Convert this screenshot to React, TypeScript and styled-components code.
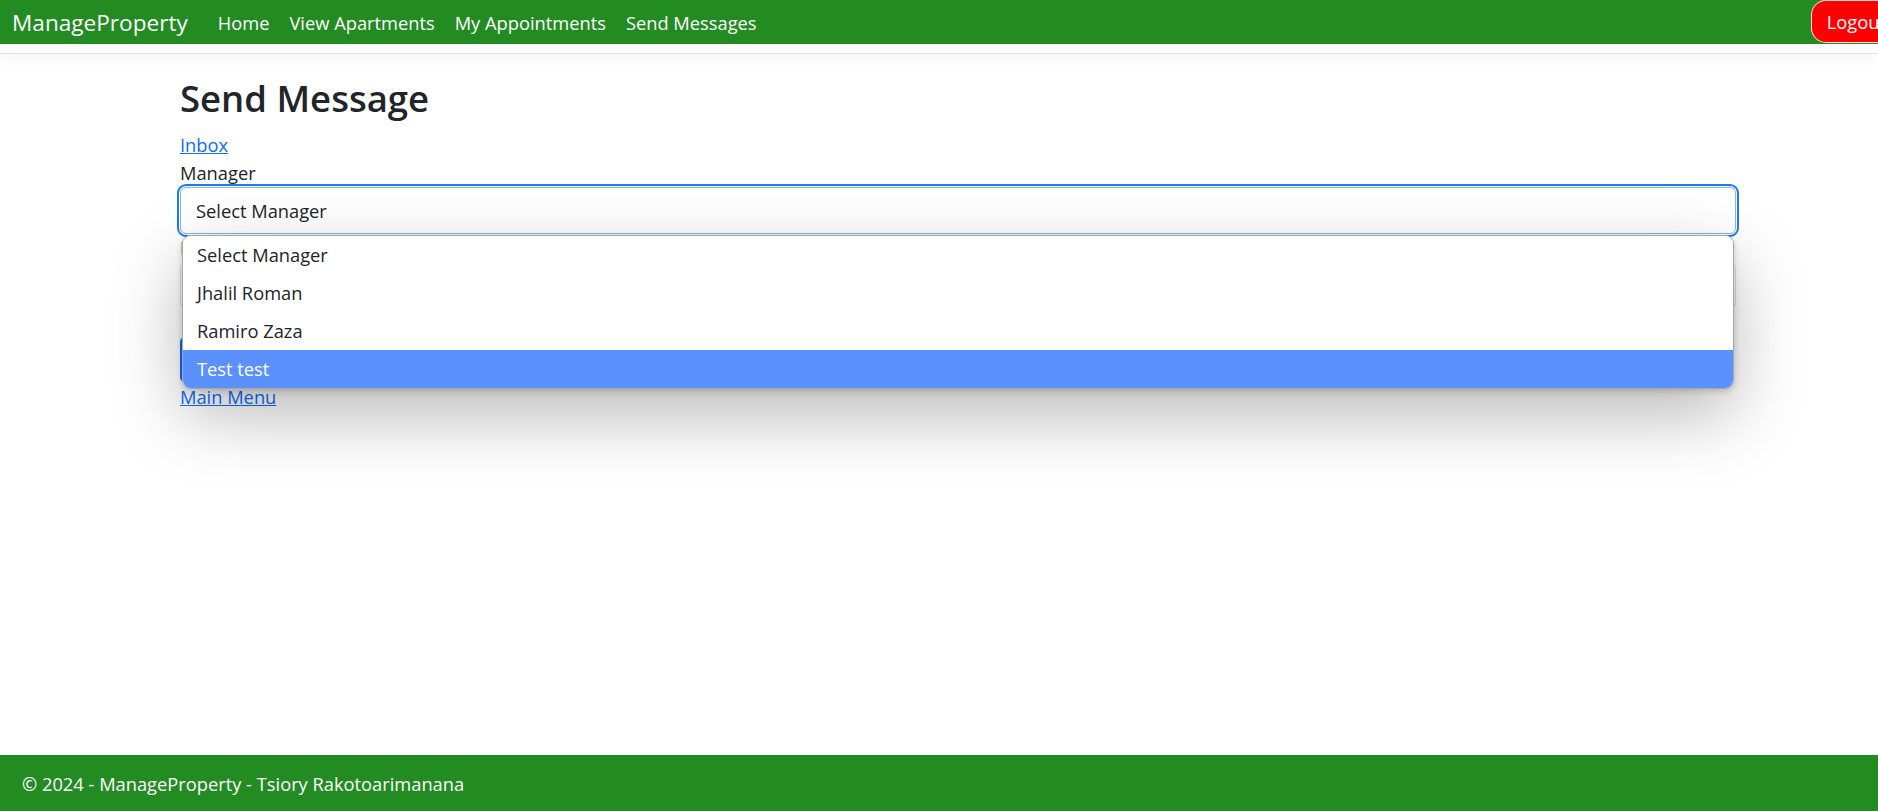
import React from "react";
import styled, { createGlobalStyle } from "styled-components";

const GlobalStyle = createGlobalStyle`
  html, body {
    margin: 0;
    padding: 0;
  }
  body {
    font-family: "Open Sans", "Noto Sans", "Liberation Sans", sans-serif;
    font-size: 18.3px;
    color: #212529;
    background: #fff;
  }
  #root {
    min-height: 100vh;
    display: flex;
    flex-direction: column;
  }
  * {
    box-sizing: border-box;
  }
`;

const Header = styled.header`
  padding-bottom: 9px;
  border-bottom: 1px solid #dee2e6;
  box-shadow: 0 5px 15px rgba(0, 0, 0, 0.04);
`;

const NavBar = styled.nav`
  height: 44px;
  background: #228b22;
  display: flex;
  align-items: center;
  padding-left: 12px;
  overflow: hidden;
`;

const Brand = styled.a`
  font-size: 22.6px;
  color: #fff;
  text-decoration: none;
  margin-right: 20px;
  white-space: nowrap;
`;

const NavLink = styled.a`
  font-size: 18.3px;
  color: #fff;
  text-decoration: none;
  padding: 0 10px;
  white-space: nowrap;
`;

const LogoutButton = styled.button`
  margin-left: auto;
  margin-right: -24px;
  align-self: flex-start;
  height: 43px;
  padding: 0 15px;
  background: #ff0000;
  color: #fff;
  border: 1px solid rgba(255, 255, 255, 0.85);
  border-radius: 15px;
  font-family: inherit;
  font-size: 18.3px;
  white-space: nowrap;
`;

const Main = styled.main`
  flex: 1;
  padding: 20px 142px 0 180px;
`;

const Title = styled.h2`
  margin: 0 0 9px;
  font-size: 36.5px;
  font-weight: 600;
  line-height: 48px;
`;

const TextLink = styled.a`
  display: block;
  width: max-content;
  color: #0d6efd;
  text-decoration: underline;
  line-height: 28px;
`;

const Label = styled.label`
  display: block;
  line-height: 28px;
`;

const SelectWrap = styled.div`
  position: relative;
`;

const SelectBox = styled.div`
  height: 47px;
  border: 1px solid #86b7fe;
  border-radius: 6px;
  outline: 2px solid #1a7cf0;
  outline-offset: 1px;
  padding: 0 15px;
  display: flex;
  align-items: center;
  background: #fff;
`;

const Popup = styled.ul`
  position: absolute;
  top: calc(100% + 1px);
  left: 2px;
  right: 2px;
  margin: 0;
  padding: 0;
  list-style: none;
  background: #fff;
  border: 1px solid #a8a8a8;
  border-radius: 9px;
  overflow: hidden;
  z-index: 10;
  box-shadow: 0 2px 6px rgba(0, 0, 0, 0.18), 0 26px 70px rgba(0, 0, 0, 0.28);
`;

const Option = styled.li<{ $active?: boolean }>`
  height: 38px;
  line-height: 38px;
  padding-left: 14px;
  color: ${(p) => (p.$active ? "#fff" : "#212529")};
  background: ${(p) => (p.$active ? "#5a91ff" : "#fff")};
`;

const TextInput = styled.input`
  display: block;
  width: 100%;
  height: 47px;
  border: 1px solid #dee2e6;
  border-radius: 6px;
  margin-bottom: 27px;
`;

const SendButton = styled.button`
  display: block;
  height: 47px;
  padding: 0 15px;
  background: #0d6efd;
  color: #fff;
  border: 1px solid #0d6efd;
  border-radius: 6px;
  font-family: inherit;
  font-size: 18.3px;
`;

const Footer = styled.footer`
  height: 56px;
  background: #228b22;
  color: #fff;
  display: flex;
  align-items: center;
  padding-left: 22px;
`;

const managers = ["Select Manager", "Jhalil Roman", "Ramiro Zaza", "Test test"];

export default function App() {
  return (
    <>
      <GlobalStyle />
      <Header>
        <NavBar>
          <Brand href="#">ManageProperty</Brand>
          <NavLink href="#">Home</NavLink>
          <NavLink href="#">View Apartments</NavLink>
          <NavLink href="#">My Appointments</NavLink>
          <NavLink href="#">Send Messages</NavLink>
          <LogoutButton>Logout</LogoutButton>
        </NavBar>
      </Header>
      <Main>
        <Title>Send Message</Title>
        <TextLink href="#">Inbox</TextLink>
        <Label>Manager</Label>
        <SelectWrap>
          <SelectBox>Select Manager</SelectBox>
          <Popup>
            {managers.map((m) => (
              <Option key={m} $active={m === "Test test"}>
                {m}
              </Option>
            ))}
          </Popup>
        </SelectWrap>
        <Label>Message</Label>
        <TextInput />
        <SendButton>Send</SendButton>
        <TextLink href="#">Main Menu</TextLink>
      </Main>
      <Footer>© 2024 - ManageProperty - Tsiory Rakotoarimanana</Footer>
    </>
  );
}
